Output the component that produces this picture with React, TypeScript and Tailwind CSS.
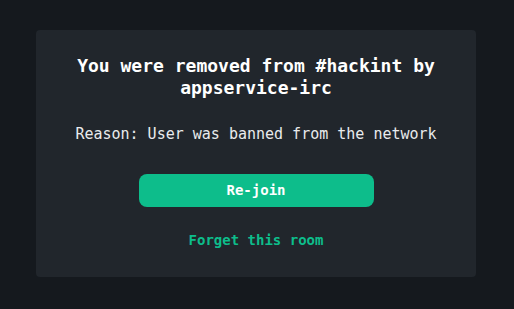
export default function App() {
  const mono = { fontFamily: '"DejaVu Sans Mono", "Liberation Mono", monospace' };
  return (
    <div className="h-screen w-full bg-[#15191e] pt-[30px]" style={mono}>
      <div className="ml-[36px] flex w-[440px] flex-col items-center rounded-[4px] bg-[#21262c] pb-[27px] pt-[25px] text-center">
        <h1 className="text-[18px] font-bold leading-[22px] text-white">
          You were removed from #hackint by
          <br />
          appservice-irc
        </h1>
        <p className="mt-[25px] text-[15px] leading-[20px] text-[#e9ebed]">
          Reason: User was banned from the network
        </p>
        <button className="mt-[30px] flex h-[33px] w-[235px] items-center justify-center rounded-[8px] bg-[#0dbd8b] text-[14px] font-bold text-white">
          Re-join
        </button>
        <button className="mt-[23px] text-[14px] font-bold leading-[20px] text-[#0dbd8b]">
          Forget this room
        </button>
      </div>
    </div>
  );
}
